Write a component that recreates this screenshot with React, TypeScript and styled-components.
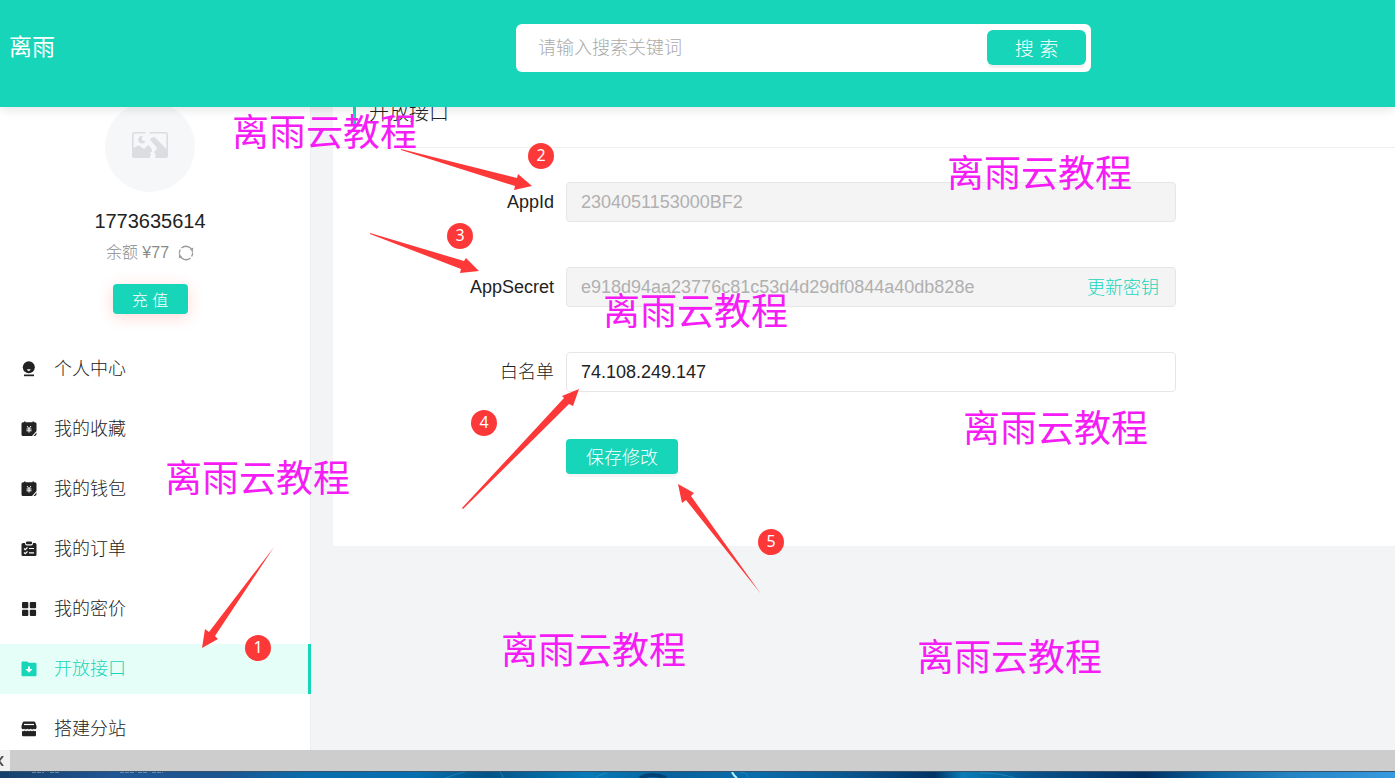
import React from "react";
import styled, { createGlobalStyle, css } from "styled-components";

const teal = "#17d5b9";

const GlobalStyle = createGlobalStyle`
  * { box-sizing: border-box; }
  body {
    margin: 0;
    overflow: hidden;
    color: #222;
    font-family: "Liberation Sans", "Noto Sans CJK SC", sans-serif;
    font-size: 18px;
    font-weight: 300;
  }
  button, input { font: inherit; }
`;

const Screen = styled.div`
  position: relative;
  display: flex;
  flex-direction: column;
  height: 100vh;
  overflow: hidden;
  background: #f3f4f6;
`;

const Header = styled.header`
  position: relative;
  z-index: 1;
  display: grid;
  grid-template-columns: 507px minmax(0, 575px);
  align-items: start;
  flex: none;
  height: 107px;
  padding: 24px 0 0 9px;
  background: ${teal};
  box-shadow: 0 2px 10px rgba(0, 0, 0, 0.12);
`;

const Brand = styled.a`
  color: #fff;
  font-size: 23px;
  font-weight: 400;
  line-height: 46px;
  text-decoration: none;
`;

const SearchBox = styled.form`
  display: flex;
  height: 48px;
  padding: 6px 5px 6px 22px;
  border-radius: 6px;
  background: #fff;
`;

const SearchInput = styled.input`
  flex: 1;
  min-width: 0;
  padding: 0;
  border: 0;
  outline: 0;
  background: none;
  &::placeholder { color: #aaa; opacity: 1; }
`;

const Button = styled.button<{ $kind: "search" | "charge" | "save" }>`
  border: 0;
  padding: 0;
  border-radius: 4px;
  background: ${teal};
  color: #fff;
  cursor: pointer;
  ${(p) => p.$kind === "search" && css`
    width: 99px;
    height: 35px;
    padding-bottom: 1px;
    border-radius: 6px;
    font-size: 19px;
    box-shadow: 0 3px 1px rgba(0, 0, 0, 0.06);
  `}
  ${(p) => p.$kind === "charge" && css`
    width: 75px;
    height: 30px;
    font-size: 16px;
    box-shadow: 0 3px 16px rgba(255, 60, 40, 0.2);
  `}
  ${(p) => p.$kind === "save" && css`
    width: 112px;
    height: 35px;
    padding-bottom: 2px;
    box-shadow: 0 3px 1px rgba(0, 0, 0, 0.04);
  `}
`;

const Body = styled.div`
  display: flex;
  flex: 1;
  min-height: 0;
  overflow: hidden;
`;

const Sidebar = styled.aside`
  flex: none;
  width: 311px;
  border-right: 1px solid #edeef0;
  background: #fff;
`;

const Profile = styled.section`
  display: flex;
  flex-direction: column;
  align-items: center;
  width: 300px;
  margin-top: -5px;
`;

const Avatar = styled.div`
  display: grid;
  place-items: center;
  width: 90px;
  height: 90px;
  padding-bottom: 4px;
  border-radius: 50%;
  background: #f6f7f9;
`;

const UserName = styled.div`
  margin-top: 16px;
  font-size: 20px;
  line-height: 26px;
`;

const Balance = styled.div`
  display: flex;
  align-items: center;
  gap: 9px;
  margin: 7px 0 19px;
  color: #8a8a8a;
  font-size: 16px;
  line-height: 24px;
`;

const IconButton = styled.button`
  display: flex;
  padding: 0;
  border: 0;
  background: none;
  color: #999;
`;

const Menu = styled.nav`
  display: flex;
  flex-direction: column;
  gap: 10px;
  margin-top: 30px;
`;

const MenuItem = styled.a<{ $active?: boolean }>`
  display: flex;
  align-items: center;
  gap: 16px;
  height: 50px;
  padding-left: 20px;
  margin-right: -1px;
  border-right: 3px solid ${(p) => (p.$active ? teal : "transparent")};
  background: ${(p) => (p.$active ? "#e5fff8" : "none")};
  color: ${(p) => (p.$active ? teal : "#222")};
  text-decoration: none;
  line-height: 26px;
`;

const Main = styled.main`
  flex: 1;
  min-width: 0;
  padding-left: 22px;
`;

const Panel = styled.section`
  overflow: hidden;
  padding-bottom: 72px;
  background: #fff;
`;

const PanelHead = styled.div`
  display: flex;
  align-items: center;
  height: 71px;
  margin-top: -30px;
  padding: 2px 0 0 20px;
  border-bottom: 1px solid #f0f0f0;
`;

const PanelTitle = styled.h1`
  margin: 0;
  padding-left: 13px;
  border-left: 3px solid ${teal};
  font-size: 20px;
  font-weight: 300;
  line-height: 24px;
`;

const Form = styled.form`
  display: grid;
  grid-template-columns: 221px minmax(0, 610px);
  column-gap: 12px;
  row-gap: 45px;
  padding-top: 34px;
`;

const Label = styled.label`
  line-height: 40px;
  text-align: right;
`;

const Field = styled.div<{ $disabled?: boolean }>`
  display: flex;
  align-items: center;
  height: 40px;
  padding: 0 16px 0 14px;
  border: 1px solid #e6e6e6;
  border-radius: 4px;
  background: ${(p) => (p.$disabled ? "#f4f4f4" : "#fff")};
`;

const FieldInput = styled.input`
  flex: 1;
  min-width: 0;
  padding: 0;
  border: 0;
  outline: 0;
  background: none;
  color: #222;
  &:disabled { color: #b0b0b0; }
`;

const TextButton = styled.button`
  padding: 0 0 2px;
  border: 0;
  background: none;
  color: ${teal};
`;

const Actions = styled.div`
  display: flex;
  grid-column: 2;
  margin-top: 2px;
`;

const Scrollbar = styled.div`
  display: flex;
  flex: none;
  height: 21px;
  background: #cdcdcd;
`;

const ScrollArrow = styled.span`
  display: flex;
  align-items: center;
  width: 10px;
  background: #f1f1f1;
`;

const Desktop = styled.footer`
  flex: none;
  height: 7px;
  overflow: hidden;
  border-top: 1px solid #36536d;
  background: linear-gradient(90deg, #163f6b 0%, #205593 8%, #1c5590 16%, #0b6cab 22%, #066fae 30%, #025386 35%, #077bb7 42%, #07619c 48%, #086dab 54%, #0a5a93 60%, #023365 67%, #087cb6 69%, #08528a 74%, #023061 82%, #0b64a0 87%, #2482c0 92%, #3799df 100%);
  svg { display: block; width: 100%; height: 6px; }
`;

const Annotations = styled.div`
  position: absolute;
  inset: 0;
  z-index: 2;
  pointer-events: none;
`;

const Watermark = styled.span<{ $x: number; $y: number }>`
  position: absolute;
  left: ${(p) => p.$x}px;
  top: ${(p) => p.$y}px;
  color: #f51cf5;
  font-size: 37px;
  font-weight: 400;
  line-height: 40px;
  white-space: nowrap;
`;

const Badge = styled.span<{ $x: number; $y: number }>`
  position: absolute;
  left: ${(p) => p.$x}px;
  top: ${(p) => p.$y}px;
  width: 26px;
  height: 26px;
  border-radius: 50%;
  background: #fd3838;
  color: #fff;
  font-family: "Noto Sans", sans-serif;
  font-size: 16px;
  font-weight: 400;
  line-height: 24px;
  text-align: center;
`;

const Arrows = styled.svg`
  position: absolute;
  left: 0;
  top: 0;
  fill: #fd3838;
`;

const Glyph = ({ children }: { children: React.ReactNode }) => (
  <svg width="18" height="18" viewBox="0 0 18 18" fill="currentColor" aria-hidden="true">{children}</svg>
);

const noteIcon = (
  <Glyph>
    <path d="M3 2.200h1V1.400h1.500v.8h7v-.8H14v.8h1q1.500 0 1.500 1.500V11L12 16H3q-1.500 0-1.500-1.500V3.700Q1.500 2.200 3 2.200z" />
    <path d="M16.500 12.500v1.500q0 2-2 2h-1z" />
    <path d="M7 6l2 2.600L11 6M6.500 9h5M6.500 10.800h5M9 8.600v4" fill="none" stroke="#fff" strokeWidth="1" />
  </Glyph>
);

const menu = [
  {
    text: "个人中心",
    icon: (
      <Glyph>
        <circle cx="8.800" cy="7.200" r="6" />
        <path d="M4 14.500h10v1.700H4z" />
        <path d="M7 9.200h3.600q-.3 1.700-1.800 1.700T7 9.200z" fill="#fff" />
      </Glyph>
    ),
  },
  { text: "我的收藏", icon: noteIcon },
  { text: "我的钱包", icon: noteIcon },
  {
    text: "我的订单",
    icon: (
      <Glyph>
        <path d="M3 3h2q0 2.500 2 2.500h4q2 0 2-2.500h2q1.500 0 1.500 1.500v10Q16.500 16 15 16H3q-1.500 0-1.500-1.500v-10Q1.500 3 3 3z" />
        <rect x="6" y="1.500" width="6" height="2.700" rx="1" />
        <path d="m4 8.500 1.200 1.200L7.500 7.500M4 12.500l1.200 1.200 2.300-2.200M9 8.500h5M9 12.800h5" fill="none" stroke="#fff" strokeWidth="1.200" />
      </Glyph>
    ),
  },
  {
    text: "我的密价",
    icon: (
      <Glyph>
        <rect x="2" y="2" width="6.300" height="6.300" rx="1" />
        <rect x="9.800" y="2" width="6.300" height="6.300" rx="1" />
        <rect x="2" y="9.800" width="6.300" height="6.300" rx="1" />
        <rect x="9.800" y="9.800" width="6.300" height="6.300" rx="1" />
      </Glyph>
    ),
  },
  {
    text: "开放接口",
    active: true,
    icon: (
      <Glyph>
        <path d="M2.500 1.500h4.500l2 1.300h6.300q1.200 0 1.200 1.200v11q0 1.200-1.200 1.200H2.700q-1.200 0-1.200-1.200V2.500q0-1 1-1z" />
        <path d="M8 6.500h2V9h2.500L9 12.800 5.500 9H8z" fill="#fff" />
      </Glyph>
    ),
  },
  {
    text: "搭建分站",
    icon: (
      <Glyph>
        <path d="M4 1.500h10q1 0 1.300 1L16.500 6v2q-1 2.200-2.500.7-1.600 1.500-3.300 0-1.700 1.500-3.400 0-1.700 1.500-3.300 0Q2.500 10.200 1.500 8V6l1.200-3.500q.3-1 1.300-1z" />
        <path d="M2 11q1.500.6 2.500-.4 1.500 1.300 3 0 1.500 1.300 3 0 1.500 1.300 3 0 1 1 2.500.4v4q0 1.200-1 1.200H3q-1 0-1-1.200z" />
        <path d="M4 4.500h10" stroke="#fff" strokeWidth="1.200" />
      </Glyph>
    ),
  },
];

const watermarks = [
  [232, 114], [947, 155], [603, 293], [963, 410], [165, 460], [501, 632], [917, 639],
];

const badges = [
  [245, 635], [528, 143], [447, 223], [471, 410], [758, 529],
];

export default function App() {
  return (
    <Screen>
      <GlobalStyle />
      <Header>
        <Brand href="#">离雨</Brand>
        <SearchBox>
          <SearchInput aria-label="搜索" placeholder="请输入搜索关键词" />
          <Button type="button" $kind="search">搜 索</Button>
        </SearchBox>
      </Header>
      <Body>
        <Sidebar>
          <Profile>
            <Avatar>
              <svg width="36" height="26" viewBox="0 0 36 26" fill="#dcdde0" aria-hidden="true">
                <path d="M2 0h12l-1 1.600H1.600V16L6 13.500q1.500 0 3 1.500l3 2 3.500-3.500h1.500l3 4v2l-2 1.500 1 2-1.500 3H2q-2 0-2-2V2q0-2 2-2z" />
                <path d="M18 0h16q2 0 2 2v22q0 2-2 2H23l.5-3.500L22 19.500l2.500-1.500v-3L19 9l-1-2 3.500-2 1.500.5L34.400 17V1.600H17z" />
                <path d="M11 4a3.800 3.800 0 1 0 2.500 5.200Q10 9 9.800 7 9.600 5 11 4z" />
              </svg>
            </Avatar>
            <UserName>1773635614</UserName>
            <Balance>
              <span>余额 ¥77</span>
              <IconButton type="button" aria-label="刷新">
                <svg width="16" height="16" viewBox="0 0 16 16" fill="none" stroke="currentColor" strokeWidth="1.300" aria-hidden="true">
                  <path d="M3.500 3A6.700 6.700 0 0 1 14.600 7.500M1.400 8.500A6.700 6.700 0 0 0 12.500 13" />
                  <path d="M1.400 8a6.700 6.700 0 0 1 1-3.500M14.600 8a6.700 6.700 0 0 1-1 3.500" />
                  <path d="m11.800 4.500 3 .8.600-2.800zM4.200 11.500l-3-.8-.6 2.800z" fill="currentColor" stroke="none" />
                </svg>
              </IconButton>
            </Balance>
            <Button type="button" $kind="charge">充 值</Button>
          </Profile>
          <Menu>
            {menu.map((item) => (
              <MenuItem key={item.text} href="#" $active={item.active}>
                {item.icon}
                {item.text}
              </MenuItem>
            ))}
          </Menu>
        </Sidebar>
        <Main>
          <Panel>
            <PanelHead><PanelTitle>开放接口</PanelTitle></PanelHead>
            <Form>
              <Label htmlFor="app-id">AppId</Label>
              <Field $disabled><FieldInput id="app-id" disabled defaultValue="2304051153000BF2" /></Field>
              <Label htmlFor="app-secret">AppSecret</Label>
              <Field $disabled>
                <FieldInput id="app-secret" disabled defaultValue="e918d94aa23776c81c53d4d29df0844a40db828e" />
                <TextButton type="button">更新密钥</TextButton>
              </Field>
              <Label htmlFor="whitelist">白名单</Label>
              <Field><FieldInput id="whitelist" defaultValue="74.108.249.147" /></Field>
              <Actions><Button type="button" $kind="save">保存修改</Button></Actions>
            </Form>
          </Panel>
        </Main>
      </Body>
      <Scrollbar>
        <ScrollArrow>
          <svg width="4" height="10" viewBox="0 0 4 10" fill="none" stroke="#505050" strokeWidth="2" aria-hidden="true"><path d="M3 0-1 5l4 5" /></svg>
        </ScrollArrow>
      </Scrollbar>
      <Desktop>
        <svg viewBox="0 0 1395 6" preserveAspectRatio="none" fill="none" aria-hidden="true">
          <path d="M732 0q2 4 5 6" stroke="#b8f0ff" strokeWidth="2" />
          <path d="M640 6q12-6 26 0" stroke="#034273" strokeWidth="4" />
          <path d="M445 6q10-4 20-6M500 0q3 3 3 6M595 6q3-3 12-5M740 1q6-2 8 4M980 1q20 0 35 5" stroke="#25a0cd" strokeOpacity="0.5" />
          <path d="M32 0h12M50 0h10M120 0h14M138 0h10M152 0h11" stroke="#b9c6cc" strokeDasharray="4 1" />
        </svg>
      </Desktop>
      <Annotations>
        {watermarks.map(([x, y]) => <Watermark key={`${x}-${y}`} $x={x} $y={y}>离雨云教程</Watermark>)}
        <Arrows width="1395" height="778" viewBox="0 0 1395 778" aria-hidden="true">
          <path d="M274 547 215 636 218 639 202 648 205 629 209 632z" />
          <path d="M401 149 517 178 518 174 532 186 514 190 515 186 401 150z" />
          <path d="M370 233 464 261 466 258 479 271 460 273 461 269 370 234z" />
          <path d="M462 508 564 398 562 396 579 389 573 406 569 404 463 509z" />
          <path d="M761 594 686 500 682 503 678 484 694 493 691 496z" />
        </Arrows>
        {badges.map(([x, y], i) => <Badge key={i} $x={x} $y={y}>{i + 1}</Badge>)}
      </Annotations>
    </Screen>
  );
}
